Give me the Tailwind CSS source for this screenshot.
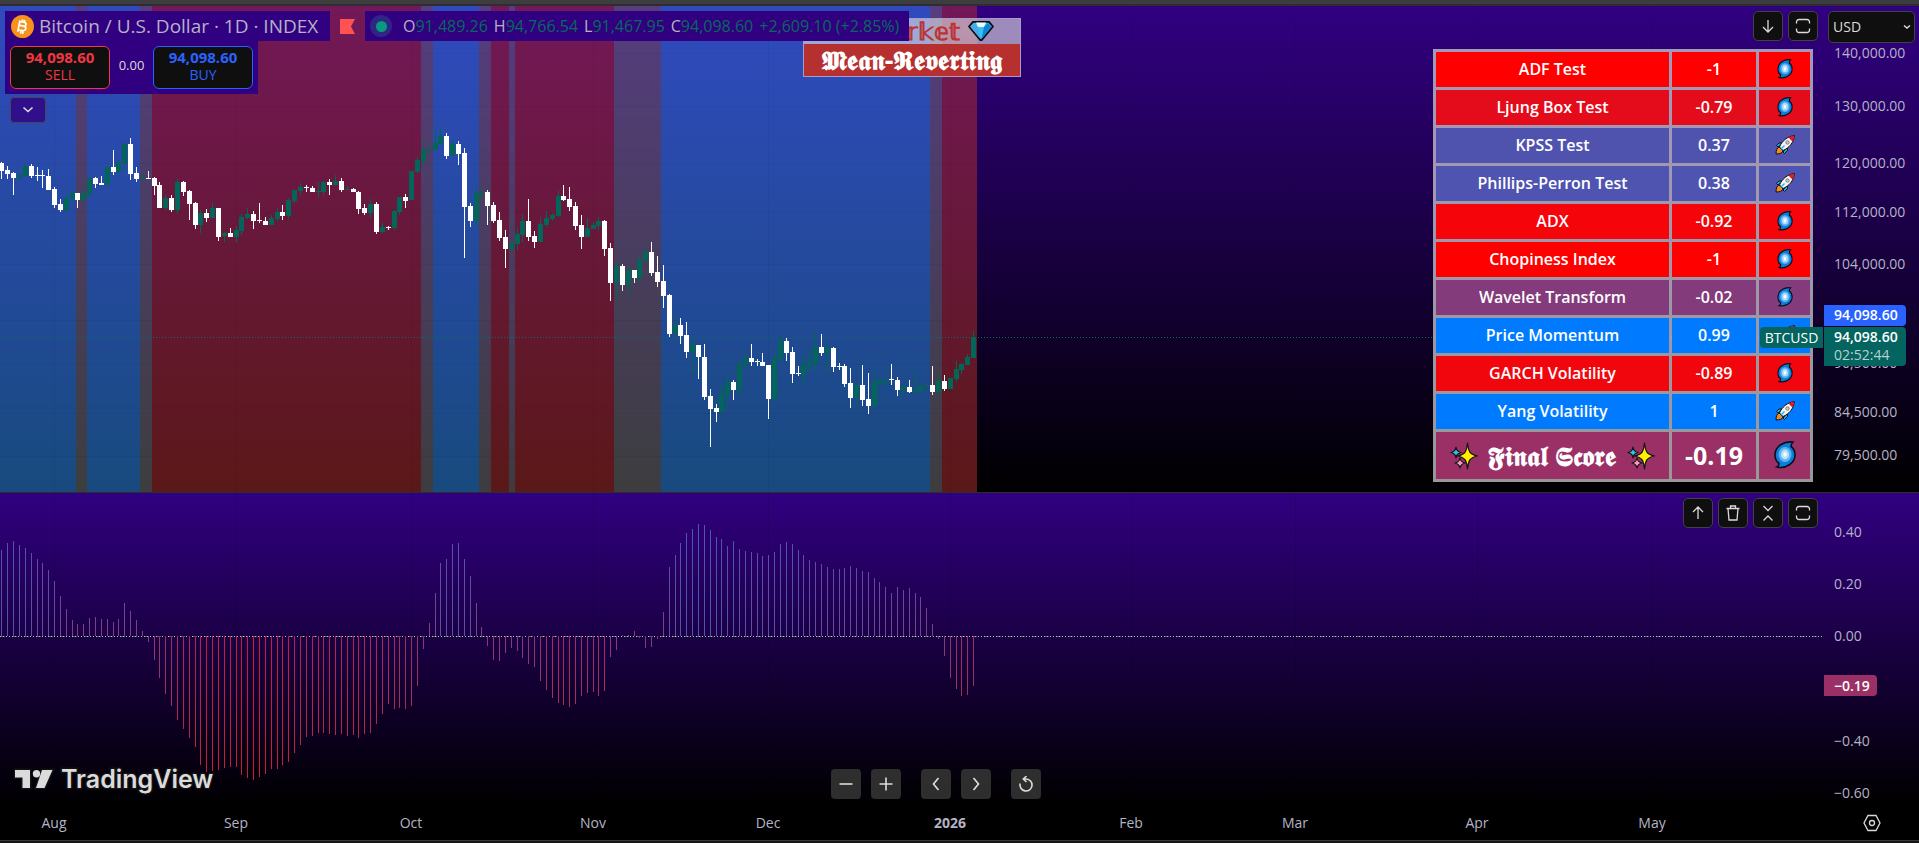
<!DOCTYPE html>
<html lang="en">
<head>
<meta charset="utf-8">
<title>BTCUSD 94,098.60</title>
<script src="https://cdn.jsdelivr.net/npm/@tailwindcss/browser@4"></script>
</head>
<body class="bg-black font-['Trebuchet_MS','Open_Sans',sans-serif] text-[#b5b3c6]">

<svg class="hidden" aria-hidden="true">
  <symbol id="cyclone" viewBox="0 0 22 28">
    <path d="M19 1C10 0 1 5 1 14c0 4 2 7 4 8.500 0 2-1 3-2 3.500 9 2 18-4 18-12 0-4-2-7-4-8.500C17 3 18 2 19 1z" fill="#0c7fdc" stroke="#08101c" stroke-width="1.600"/>
    <ellipse cx="11" cy="13.500" rx="6.500" ry="7.500" fill="#5db4f0"/>
    <ellipse cx="11" cy="13.500" rx="4" ry="5" fill="#b8e0fa"/>
    <ellipse cx="11" cy="13.500" rx="1.700" ry="2.300" fill="#fff"/>
  </symbol>
  <symbol id="rocket" viewBox="0 0 20 20">
    <path d="M1 19c0-4 1-6 3-7l4 4c-1 2-3 3-7 3z" fill="#f78a1d" stroke="#111" stroke-width="1"/>
    <path d="M3 12 1.500 10.500 4 8h4zM8 17l1.500 1.500 3-3V12z" fill="#19b1ea" stroke="#111" stroke-width="1"/>
    <path d="M4.500 12C7 6 12 1.500 19.500.500 18.500 8 14 13 8 15.500z" fill="#f4f4f4" stroke="#111" stroke-width="1"/>
    <path d="M13.500 2.500C15.500 1.400 17.500.900 19 1c0 1.800-.6 3.800-1.600 5.500z" fill="#e81224"/>
    <circle cx="12.500" cy="7.500" r="1.700" fill="#d0d0d0" stroke="#555" stroke-width=".7"/>
    <path d="M5.500 14.500l4-4" stroke="#19b1ea" stroke-width="1.300"/>
  </symbol>
  <symbol id="sparkles" viewBox="0 0 28 28">
    <g stroke="#111" stroke-width="1.200" stroke-linejoin="round">
      <path d="M17.500 1C18.500 10 20 12.500 27.500 14 20 15.500 18.500 18 17.500 27 16.500 18 15 15.500 7.500 14 15 12.500 16.500 10 17.500 1z" fill="#fff100"/>
      <path d="M6 5c.6 3.500 1.500 4.500 5 5.500-3.500 1-4.400 2-5 5.500-.6-3.500-1.500-4.500-5-5.500 3.500-1 4.400-2 5-5.500z" fill="#2bc4ee"/>
      <path d="M10 16c.6 3.200 1.500 4.200 5 5-3.500.8-4.400 2-5 5-.6-3-1.500-4.200-5-5 3.500-.8 4.400-1.800 5-5z" fill="#f59ac0"/>
    </g>
  </symbol>
  <symbol id="diamond" viewBox="0 0 26 20">
    <path d="M5 .9h16l4 4.600L13.600 19.200h-1.200L1 5.500z" fill="#33c2f2" stroke="#0a0a0a" stroke-width="1.800" stroke-linejoin="round"/>
    <path d="M8 1.500h10l-2 4.500h-6z" fill="#f2fbff"/>
    <path d="M2.500 6 6 2 10 6l2.500 12z" fill="#4aa7ec"/>
    <path d="M23.500 6 20 2 16 6l-2.500 12z" fill="#1183d6"/>
  </symbol>
  <symbol id="maximize" viewBox="0 0 18 18">
    <path d="M2.500 6.500V5A2.500 2.500 0 0 1 5 2.500h8A2.500 2.500 0 0 1 15.500 5v1.500M15.500 11.500V13a2.500 2.500 0 0 1-2.500 2.500H5A2.500 2.500 0 0 1 2.500 13v-1.500" fill="none" stroke="currentColor" stroke-width="1.300"/>
  </symbol>
</svg>

<main class="grid h-screen w-full grid-cols-1 grid-rows-[6px_486fr_1px_313fr_34px_3px] overflow-hidden">
  <div class="border-b-2 border-[#2e2e31] bg-[#3d3d40]"></div>

  <!-- Price pane -->
  <section class="relative grid grid-cols-[minmax(0,1fr)_95px] bg-linear-to-b/srgb from-[#310081] to-black" aria-label="Price chart">
    <div class="relative">
      <svg id="price" class="absolute inset-0 h-full w-full" shape-rendering="crispEdges"></svg>

      <table class="absolute top-3 left-[803px] w-[218px] border-collapse border border-[#a79cc8] text-center text-2xl leading-6 font-bold">
        <tbody>
          <tr><td class="h-[25px] bg-[#e8e8e8]/60 p-0 text-[#bd3232]"><span class="flex h-6 items-center justify-center gap-2 leading-none"><svg class="h-5 w-[26px] shrink-0"><use href="#diamond"/></svg>𝕄𝕒𝕣𝕜𝕖𝕥<svg class="h-5 w-[26px] shrink-0"><use href="#diamond"/></svg></span></td></tr>
          <tr><td class="h-[33px] bg-[#b63030] p-0 text-[27px] whitespace-nowrap text-white">𝕸𝖊𝖆𝖓-𝕽𝖊𝖛𝖊𝖗𝖙𝖎𝖓𝖌</td></tr>
        </tbody>
      </table>

      <div class="absolute top-[5px] left-[5px] flex flex-col items-start">
        <div class="flex items-center">
          <div class="flex h-[30px] w-[325px] items-center gap-[5px] bg-[#310081] pl-1.5">
            <svg class="h-[23px] w-[23px] shrink-0" viewBox="0 0 23 23"><circle cx="11.500" cy="11.500" r="11.500" fill="#f7931a"/><path d="M9 5.500l-2.300 11.300M8.300 6.300l4.500.9c3.400.8 2.600 4.300-.6 3.900l-3-.6M9 10.400l3.600.7c3.600.9 2.600 5-1.100 4.500l-4.700-.9M11.700 4.500l-.4 2.300M10 16l-.5 2.500M13.800 5l-.4 2M12 16.500l-.4 2.300" fill="none" stroke="#fff" stroke-width="1.700"/></svg>
            <span class="text-[19px] leading-6 whitespace-nowrap">Bitcoin / U.S. Dollar · 1D · INDEX</span>
          </div>
          <svg class="mx-2.5 h-[15px] w-[15px]" viewBox="0 0 15 15"><path d="M0 0h15l-4 7.500 4 7.500H0z" fill="#ff5252"/></svg>
          <div class="flex h-[30px] w-[544px] items-center bg-[#310081] pl-[5px] text-base leading-5 whitespace-nowrap">
            <span class="mr-[11px] flex h-[22px] w-[22px] items-center justify-center rounded-full bg-[#2f2585]"><span class="h-[11px] w-[11px] rounded-full bg-[#089981]"></span></span>
            <span class="flex gap-1.5 text-[#05695f]"><span><b class="font-normal text-[#b5b3c6]">O</b>91,489.26</span><span><b class="font-normal text-[#b5b3c6]">H</b>94,766.54</span><span><b class="font-normal text-[#b5b3c6]">L</b>91,467.95</span><span><b class="font-normal text-[#b5b3c6]">C</b>94,098.60</span><span>+2,609.10 (+2.85%)</span></span>
          </div>
        </div>
        <div class="flex h-[53px] w-[253px] items-start justify-between bg-[#310081] px-[5px] pt-[5px]">
          <button class="h-[43px] w-[100px] rounded-md border border-[#f23645] bg-[#0f0f0f] pb-1 text-sm leading-[17px] text-[#f23645]"><b class="block text-[15px]">94,098.60</b>SELL</button>
          <span class="self-center pb-2 text-[13px] text-[#dbdbdb]">0.00</span>
          <button class="h-[43px] w-[100px] rounded-md border border-[#2962ff] bg-[#0f0f0f] pb-1 text-sm leading-[17px] text-[#2962ff]"><b class="block text-[15px]">94,098.60</b>BUY</button>
        </div>
        <button class="mt-[3px] ml-[5px] flex h-[26px] w-9 items-center justify-center rounded border border-[#4a4458] bg-[#30108a] text-[#dbdbdb]" aria-label="Collapse legend"><svg class="h-2 w-3" viewBox="0 0 12 8"><path d="M1.500 1.500 6 5.500l4.500-4" fill="none" stroke="currentColor" stroke-width="1.600"/></svg></button>
      </div>

      <table class="absolute top-[43px] right-[11px] w-[380px] table-fixed border-separate border-spacing-[3px] bg-[#d8d8d8]/70 text-center text-base leading-5 font-semibold text-white">
        <colgroup><col class="w-[233px]"><col class="w-[84px]"><col class="w-[51px]"></colgroup>
        <tbody>
          <tr class="h-[35px] bg-[#ff0000]"><td class="p-0 pb-0.5">ADF Test</td><td class="p-0 pb-0.5">-1</td><td class="p-0 pb-0.5"><svg class="mx-auto h-5 w-4"><use href="#cyclone"/></svg></td></tr>
          <tr class="h-[35px] bg-[#e40c1b]"><td class="p-0 pb-0.5">Ljung Box Test</td><td class="p-0 pb-0.5">-0.79</td><td class="p-0 pb-0.5"><svg class="mx-auto h-5 w-4"><use href="#cyclone"/></svg></td></tr>
          <tr class="h-[35px] bg-[#5053ae]"><td class="p-0 pb-0.5">KPSS Test</td><td class="p-0 pb-0.5">0.37</td><td class="p-0 pb-0.5"><svg class="mx-auto h-5 w-5"><use href="#rocket"/></svg></td></tr>
          <tr class="h-[35px] bg-[#4f54b0]"><td class="p-0 pb-0.5">Phillips-Perron Test</td><td class="p-0 pb-0.5">0.38</td><td class="p-0 pb-0.5"><svg class="mx-auto h-5 w-5"><use href="#rocket"/></svg></td></tr>
          <tr class="h-[35px] bg-[#f5050a]"><td class="p-0 pb-0.5">ADX</td><td class="p-0 pb-0.5">-0.92</td><td class="p-0 pb-0.5"><svg class="mx-auto h-5 w-4"><use href="#cyclone"/></svg></td></tr>
          <tr class="h-[35px] bg-[#ff0000]"><td class="p-0 pb-0.5">Chopiness Index</td><td class="p-0 pb-0.5">-1</td><td class="p-0 pb-0.5"><svg class="mx-auto h-5 w-4"><use href="#cyclone"/></svg></td></tr>
          <tr class="h-[35px] bg-[#843b7b]"><td class="p-0 pb-0.5">Wavelet Transform</td><td class="p-0 pb-0.5">-0.02</td><td class="p-0 pb-0.5"><svg class="mx-auto h-5 w-4"><use href="#cyclone"/></svg></td></tr>
          <tr class="h-[35px] bg-[#007bff]"><td class="p-0 pb-0.5">Price Momentum</td><td class="p-0 pb-0.5">0.99</td><td class="p-0 pb-0.5"><svg class="mx-auto h-5 w-5"><use href="#rocket"/></svg></td></tr>
          <tr class="h-[35px] bg-[#f1060e]"><td class="p-0 pb-0.5">GARCH Volatility</td><td class="p-0 pb-0.5">-0.89</td><td class="p-0 pb-0.5"><svg class="mx-auto h-5 w-4"><use href="#cyclone"/></svg></td></tr>
          <tr class="h-[35px] bg-[#007bff]"><td class="p-0 pb-0.5">Yang Volatility</td><td class="p-0 pb-0.5">1</td><td class="p-0 pb-0.5"><svg class="mx-auto h-5 w-5"><use href="#rocket"/></svg></td></tr>
          <tr class="h-[47px] bg-[#9a3065] text-2xl leading-7 font-bold"><td class="p-0"><span class="flex items-center justify-center gap-2.5 text-[27px] whitespace-nowrap"><svg class="h-7 w-7"><use href="#sparkles"/></svg>𝕱𝖎𝖓𝖆𝖑 𝕾𝖈𝖔𝖗𝖊<svg class="h-7 w-7"><use href="#sparkles"/></svg></span></td><td class="p-0 pb-0.5 text-[25px]">-0.19</td><td class="p-0 pb-0.5"><svg class="mx-auto h-7 w-[22px]"><use href="#cyclone"/></svg></td></tr>
        </tbody>
      </table>

      <div class="absolute top-[5px] right-[6px] flex gap-[5px] text-[#dbdbdb]">
        <button class="flex h-[30px] w-[30px] items-center justify-center rounded-[5px] border border-[#434343] bg-[#0f0f0f]" aria-label="Move pane down"><svg class="h-4 w-4" viewBox="0 0 16 16"><path d="M8 2v12M3 9l5 5 5-5" fill="none" stroke="currentColor" stroke-width="1.300"/></svg></button>
        <button class="flex h-[30px] w-[30px] items-center justify-center rounded-[5px] border border-[#434343] bg-[#0f0f0f]" aria-label="Maximize pane"><svg class="h-[18px] w-[18px]"><use href="#maximize"/></svg></button>
      </div>
      <span class="absolute top-[321px] right-px flex h-[21px] w-[63px] items-center justify-center rounded-l-sm bg-[#036460] text-sm leading-none text-white">BTCUSD</span>
    </div>
    <div class="relative">
      <svg class="absolute inset-0 h-full w-full fill-[#b5b3c6] text-sm"><g>
        <text x="10" y="52">140,000.00</text><text x="10" y="105">130,000.00</text><text x="10" y="162">120,000.00</text><text x="10" y="211">112,000.00</text><text x="10" y="263">104,000.00</text><text x="10" y="362">90,500.00</text><text x="10" y="411">84,500.00</text><text x="10" y="454">79,500.00</text></g></svg>
      <div class="absolute top-0 right-0 left-0 h-[42px] bg-linear-to-b/srgb from-[#310081] to-[#2d0076] pt-[5px] pl-1">
        <div class="relative w-[87px] text-[#dbdbdb]">
          <select aria-label="Currency" class="h-8 w-full appearance-none rounded-[5px] border border-[#434343] bg-[#0f0f0f] pl-1 text-sm"><option>USD</option></select>
          <svg class="pointer-events-none absolute top-3 right-1 h-2 w-2" viewBox="0 0 8 8"><path d="M1 2.500 4 5l3-2.500" fill="none" stroke="currentColor" stroke-width="1.500"/></svg>
        </div>
      </div>
      <div class="absolute top-[299px] left-0 flex w-[82px] flex-col gap-px text-sm leading-[18px] text-white">
        <span class="flex h-[21px] items-center rounded-r-sm bg-[#2962ff] pb-px pl-2.5 font-semibold">94,098.60</span>
        <span class="flex h-[39px] flex-col justify-center rounded-r-sm bg-[#036460] pb-0.5 pl-2.5"><b class="font-semibold">94,098.60</b><span class="text-[#b6d1cf]">02:52:44</span></span>
      </div>
    </div>
  </section>

  <div class="bg-[#2e2e31]"></div>

  <!-- Score pane -->
  <section class="grid grid-cols-[minmax(0,1fr)_95px] bg-linear-to-b/srgb from-[#310081] to-black" aria-label="Score histogram">
    <div class="relative">
      <svg id="score" class="absolute inset-0 h-full w-full" shape-rendering="crispEdges"></svg>
      <div class="absolute top-[5px] right-[6px] flex gap-[5px] text-[#dbdbdb]">
        <button class="flex h-[30px] w-[30px] items-center justify-center rounded-[5px] border border-[#434343] bg-[#0f0f0f]" aria-label="Move pane up"><svg class="h-4 w-4" viewBox="0 0 16 16"><path d="M8 14V2M3 7l5-5 5 5" fill="none" stroke="currentColor" stroke-width="1.300"/></svg></button>
        <button class="flex h-[30px] w-[30px] items-center justify-center rounded-[5px] border border-[#434343] bg-[#0f0f0f]" aria-label="Delete pane"><svg class="h-[18px] w-[18px]" viewBox="0 0 18 18"><path d="M2.500 4.500h13M6.500 4.500V2h5v2.500M4 4.500l1 11.500h8l1-11.500" fill="none" stroke="currentColor" stroke-width="1.300"/></svg></button>
        <button class="flex h-[30px] w-[30px] items-center justify-center rounded-[5px] border border-[#434343] bg-[#0f0f0f]" aria-label="Collapse pane"><svg class="h-[18px] w-[18px]" viewBox="0 0 18 18"><path d="M4.500 2 9 6.500 13.500 2M4.500 16.500 9 12l4.500 4.500" fill="none" stroke="currentColor" stroke-width="1.300"/></svg></button>
        <button class="flex h-[30px] w-[30px] items-center justify-center rounded-[5px] border border-[#434343] bg-[#0f0f0f]" aria-label="Maximize pane"><svg class="h-[18px] w-[18px]"><use href="#maximize"/></svg></button>
      </div>
      <a href="#" class="absolute bottom-[9px] left-[15px] flex items-center gap-2 font-[Inter,sans-serif] text-[25px] leading-9 font-semibold text-[#dbdbdb] [paint-order:stroke_fill] [-webkit-text-stroke:3px_#121212]">
        <svg class="h-[18px] w-[38px] overflow-visible" viewBox="0 0 38 18"><path d="M0 0h15v18H7.500V7.500H0zM27 0h10.500l-8 18H21z" fill="#dbdbdb" stroke="#121212" stroke-width="3" paint-order="stroke"/><circle cx="21.500" cy="3.700" r="3.700" fill="#dbdbdb"/></svg>TradingView</a>
      <div class="absolute inset-x-0 bottom-[7px] flex justify-center gap-5 pl-12 text-[#dbdbdb]">
        <div class="flex gap-2.5">
          <button class="flex h-[30px] w-[30px] items-center justify-center rounded bg-[#2e2e2e]" aria-label="Zoom out"><svg class="h-4 w-4" viewBox="0 0 16 16"><path d="M1.500 8h13" stroke="currentColor" stroke-width="1.600"/></svg></button>
          <button class="flex h-[30px] w-[30px] items-center justify-center rounded bg-[#2e2e2e]" aria-label="Zoom in"><svg class="h-4 w-4" viewBox="0 0 16 16"><path d="M1.500 8h13M8 1.500v13" stroke="currentColor" stroke-width="1.600"/></svg></button>
        </div>
        <div class="flex gap-2.5">
          <button class="flex h-[30px] w-[30px] items-center justify-center rounded bg-[#2e2e2e]" aria-label="Scroll left"><svg class="h-4 w-4" viewBox="0 0 16 16"><path d="M10.500 2 5.500 8l5 6" fill="none" stroke="currentColor" stroke-width="1.700"/></svg></button>
          <button class="flex h-[30px] w-[30px] items-center justify-center rounded bg-[#2e2e2e]" aria-label="Scroll right"><svg class="h-4 w-4" viewBox="0 0 16 16"><path d="M5.500 2l5 6-5 6" fill="none" stroke="currentColor" stroke-width="1.700"/></svg></button>
        </div>
        <button class="flex h-[30px] w-[30px] items-center justify-center rounded bg-[#2e2e2e]" aria-label="Reset chart"><svg class="h-4 w-4" viewBox="0 0 16 16"><path d="M2.200 7.500a6 6 0 1 0 6-4.500H5.500M8.500 0 5.300 3l3.200 3" fill="none" stroke="currentColor" stroke-width="1.600"/></svg></button>
      </div>
    </div>
    <div class="relative">
      <svg class="absolute inset-0 h-full w-full fill-[#b5b3c6] text-sm"><text x="10" y="44">0.40</text><text x="10" y="96">0.20</text><text x="10" y="148">0.00</text><text x="10" y="253">−0.40</text><text x="10" y="305">−0.60</text></svg>
      <span class="absolute top-[182px] left-0 flex h-[21px] w-[53px] items-center rounded-r-sm bg-[#9a3065] pl-2.5 text-sm font-semibold text-white">−0.19</span>
    </div>
  </section>

  <!-- Time axis -->
  <footer class="grid grid-cols-[minmax(0,1fr)_95px] bg-black">
    <svg class="h-full w-full fill-[#b5b3c6] text-sm" text-anchor="middle"><text x="54" y="22">Aug</text><text x="236" y="22">Sep</text><text x="411" y="22">Oct</text><text x="593" y="22">Nov</text><text x="768" y="22">Dec</text><text x="950" y="22" class="font-bold">2026</text><text x="1131" y="22">Feb</text><text x="1295" y="22">Mar</text><text x="1477" y="22">Apr</text><text x="1652" y="22">May</text></svg>
    <button class="flex items-center justify-center text-[#dbdbdb]" aria-label="Chart settings"><svg class="h-[18px] w-[18px]" viewBox="0 0 18 18"><path d="M5 1.500h8L17 9l-4 7.500H5L1 9z" fill="none" stroke="currentColor" stroke-width="1.300"/><circle cx="9" cy="9" r="2.500" fill="none" stroke="currentColor" stroke-width="1.300"/></svg></button>
  </footer>
  <div class="border-t border-[#3a3a3a] bg-[#141414]"></div>
</main>

<script>
const NS = 'http://www.w3.org/2000/svg';
const price = document.getElementById('price'), score = document.getElementById('score');
function add(svg, tag, attrs) {
  const el = document.createElementNS(NS, tag);
  for (const k in attrs) el.setAttribute(k, attrs[k]);
  svg.appendChild(el);
}
const barX = i => Math.round(1.39 + 5.854 * i);

// regime bands: right edge and kind
const tint = { b: '#3094fc', g: '#7a7a7e', r: '#b63030' };
let from = 0;
for (const [to, k] of [[76,'b'],[87,'g'],[140,'b'],[152,'g'],[421,'r'],[433,'g'],[479,'b'],[491,'g'],[509,'r'],[515,'g'],[614,'r'],[661,'g'],[930,'b'],[942,'g'],[977,'r']]) {
  add(price, 'rect', { x: from, y: 0, width: to - from, height: '100%', fill: tint[k], 'fill-opacity': 0.5 });
  from = to;
}
// grid
for (const [svg, opacity] of [[price, 0.05], [score, 0.12]])
  for (const x of [54,236,411,593,768,950,1131,1295,1477,1652])
    add(svg, 'rect', { x, y: 0, width: 1, height: '100%', fill: '#000', 'fill-opacity': opacity });
for (const y of [47,100,157,206,258,314,358,407,450]) add(price, 'rect', { x: 0, y, width: '100%', height: 1, fill: '#000', 'fill-opacity': 0.04 });
for (const y of [38,91,247,300]) add(score, 'rect', { x: 0, y, width: '100%', height: 1, fill: '#000', 'fill-opacity': 0.1 });

// last price line
add(price, 'line', { x1: 0, y1: 331.5, x2: '100%', y2: 331.5, stroke: '#0a6a66', 'stroke-width': 1, 'stroke-dasharray': '1 2' });

// candles: direction, high, body top, body bottom, low (three units per pixel)
const candles = `w486,489,513,537 w498,510,522,537 w516,519,534,585 g519,525,534,540 g492,498,528,528 w492,498,528,534 w501,525,528,543 w510,525,528,564 w507,528,570,570 w561,567,615,624
w597,612,630,636 g585,594,630,636 g570,579,597,597 w579,579,600,624 g570,579,600,612 g534,534,582,594 w531,534,552,564 w528,549,555,555 g501,501,555,555 w450,501,516,525
g483,486,516,522 g426,432,489,510 w414,432,522,540 w501,519,537,546 g522,534,537,540 w513,534,537,537 w531,534,558,585 w546,555,624,624 g585,594,624,630 w585,594,630,636
g537,546,630,642 w543,546,576,588 w570,573,612,660 w606,609,675,687 g630,639,675,699 w627,639,654,666 g609,624,654,654 w624,624,711,723 g696,699,708,726 w684,699,711,711
g678,690,711,729 g642,651,693,705 g624,642,654,657 w633,642,663,687 w609,660,663,669 w651,663,675,675 g645,654,675,675 g624,636,657,663 w615,636,648,660 g594,600,648,657
g570,570,603,609 g549,561,573,585 w555,561,564,576 w558,564,576,576 g546,573,576,591 g543,546,576,585 w537,546,555,585 g525,543,555,558 w534,543,570,576 g558,567,570,570
w564,567,576,576 w573,576,627,642 w612,624,639,645 g597,612,639,654 w606,612,696,702 g669,681,696,699 w678,681,684,690 g630,633,684,690 g591,591,636,645 w582,591,603,624
g513,513,600,600 g471,480,516,519 g420,450,483,498 g435,447,450,462 g390,429,450,450 g381,408,432,435 w399,408,468,477 g420,432,468,468 w423,432,462,495 w444,459,621,774
w609,618,663,681 g564,579,663,681 g562,575,579,603 w570,576,618,675 w606,615,663,669 w636,660,714,723 w690,711,747,804 g729,729,747,747 g684,702,732,750 g642,663,705,726
w597,663,711,723 w693,708,726,744 g651,672,726,726 g633,654,675,681 g639,645,657,663 g572,588,648,651 w555,588,600,603 w561,597,621,633 w606,618,678,690 w645,675,711,747
g654,684,711,711 g666,675,687,687 g651,663,678,690 w660,663,747,768 w729,744,849,903 g783,798,849,900 w792,798,855,873 g795,810,855,894 w810,810,834,849 g768,780,834,849
g741,756,783,786 w726,756,819,828 w768,816,846,861 w795,843,888,924 w882,885,1002,1011 g948,975,1002,1002 w954,975,1008,1032 w966,1005,1056,1074 g1017,1035,1056,1122 w1035,1035,1071,1137
w1032,1071,1191,1200 w1167,1188,1227,1341 w1212,1224,1236,1266 g1152,1182,1236,1236 g1122,1146,1185,1221 w1140,1146,1170,1200 g1089,1092,1170,1188 g1059,1074,1095,1098 w1032,1074,1086,1098 w1077,1083,1086,1098
w1059,1086,1098,1098 w1095,1095,1197,1257 g1050,1074,1197,1197 g1008,1023,1077,1080 w1014,1023,1059,1083 w1041,1056,1122,1149 w1098,1119,1122,1128 g1062,1095,1125,1158 g1050,1089,1098,1113 g996,1041,1092,1110
w1002,1041,1059,1068 g1023,1044,1059,1122 w1041,1044,1101,1116 w1089,1098,1101,1110 w1092,1098,1152,1161 w1104,1149,1194,1224 g1152,1155,1194,1218 w1095,1155,1200,1218 w1119,1197,1218,1242 g1119,1149,1218,1221
g1140,1143,1152,1155 g1128,1140,1146,1161 w1092,1137,1140,1155 w1131,1140,1170,1188 g1152,1161,1170,1191 w1140,1161,1176,1179 g1116,1170,1176,1179 g1155,1158,1173,1176 g1152,1155,1158,1167 w1098,1155,1176,1185
g1119,1143,1176,1185 w1125,1143,1167,1173 g1134,1134,1167,1167 g1083,1107,1137,1146 g1089,1092,1110,1122 g1062,1071,1095,1095 g993,1011,1074,1074`.split(/\s+/);
candles.forEach((c, i) => {
  const [h, t, b, l] = c.slice(1).split(',').map(v => Math.round(v / 3) - 6);
  const up = c[0] === 'g', x = barX(i), edge = up ? '#00684f' : '#fff';
  add(price, 'rect', { x, y: h, width: 1, height: l - h, fill: edge });
  add(price, 'rect', { x: x - 2, y: t, width: 5, height: Math.max(1, b - t), fill: edge });
  if (up && b - t > 2) add(price, 'rect', { x: x - 1, y: t + 1, width: 3, height: b - t - 2, fill: '#036460' });
});

// histogram, pixels from the zero line (260 px = 1.00)
const bars = [86,93,95,91,88,83,77,73,66,55,40,27,16,12,12,18,19,17,17,14,17,33,25,16,5,-6,-24,-42,-58,-70,-84,-93,-102,-111,-129,-136,-135,-134,-132,-131,-131,-139,-142,-144,-141,-138,-133,-133,-129,-126,-117,-109,-101,-100,-97,-97,-98,-99,-98,-100,-99,-102,-98,-97,-88,-78,-68,-73,-72,-73,-70,-50,-13,13,43,73,77,92,93,77,60,33,9,-10,-24,-25,-17,-12,-15,-22,-28,-31,-45,-54,-62,-67,-69,-71,-68,-60,-57,-56,-60,-55,-21,-14,1,1,5,-2,-12,-11,-3,24,69,81,93,103,107,112,111,106,99,97,90,95,87,85,84,83,80,81,84,92,94,92,86,81,76,74,72,69,67,67,68,70,68,65,64,58,54,49,43,49,46,48,43,39,28,12,-3,-20,-42,-53,-60,-59,-50];
const zero = 143;
const mix = (a, b, t) => Math.round(a + (b - a) * t);
add(score, 'line', { x1: 0, y1: zero + .5, x2: '100%', y2: zero + .5, stroke: '#3d6b4a', 'stroke-width': 1, 'stroke-dasharray': '5 7' });
add(score, 'line', { x1: 0, y1: zero + .5, x2: '100%', y2: zero + .5, stroke: '#c4c4b4', 'stroke-width': 1, 'stroke-dasharray': '1 2' });
bars.forEach((v, i) => {
  const s = Math.min(1, Math.abs(v) / 260), end = v > 0 ? [0, 123, 255] : [255, 0, 0];
  const c = [130, 61, 125].map((m, k) => mix(m, end[k], s));
  add(score, 'rect', { x: barX(i), y: v > 0 ? zero - v : zero, width: 1, height: Math.abs(v), fill: `rgb(${c})` });
});
</script>
</body>
</html>
